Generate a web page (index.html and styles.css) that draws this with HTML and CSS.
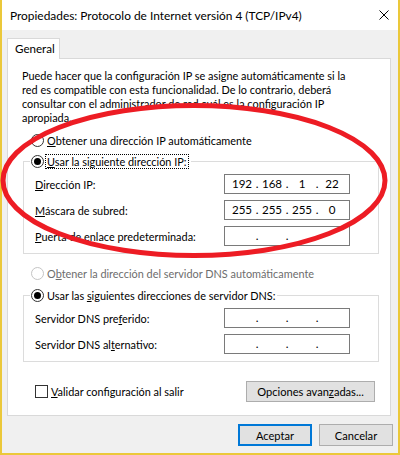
FILE: index.html
```html
<!DOCTYPE html>
<html lang="es">
<head>
<meta charset="utf-8">
<title>Propiedades: Protocolo de Internet versión 4 (TCP/IPv4)</title>
<link rel="stylesheet" href="styles.css">
</head>
<body>
<div class="window">
  <div class="titlebar">
    <span class="title">Propiedades: Protocolo de Internet versión 4 (TCP/IPv4)</span>
    <span class="close"><svg width="10" height="10" viewBox="0 0 10 10"><path d="M0.5 0.5L9.5 9.5M9.5 0.5L0.5 9.5" stroke="#000" stroke-width="1" fill="none"/></svg></span>
  </div>
  <div class="content">
    <div class="tabs"><div class="tab">General</div></div>
    <div class="panel">
      <p class="intro">Puede hacer que la configuración IP se asigne automáticamente si la<br>red es compatible con esta funcionalidad. De lo contrario, deberá<br>consultar con el administrador de red cuál es la configuración IP<br>apropiada.</p>

      <div class="radio-row first"><span class="radio"></span><span><u>O</u>btener una dirección IP automáticamente</span></div>

      <div class="group g1">
        <div class="legend"><span class="radio checked"></span><span class="focus"><u>U</u>sar la siguiente dirección IP:</span></div>
        <div class="field first-field"><span><u>D</u>irección IP:</span><span class="ip"><span class="seg">192</span><span class="dot">.</span><span class="seg">168</span><span class="dot">.</span><span class="seg">1</span><span class="dot">.</span><span class="seg">22</span></span></div>
        <div class="field"><span><u>M</u>áscara de subred:</span><span class="ip"><span class="seg">255</span><span class="dot">.</span><span class="seg">255</span><span class="dot">.</span><span class="seg">255</span><span class="dot">.</span><span class="seg">0</span></span></div>
        <div class="field"><span><u>P</u>uerta de enlace predeterminada:</span><span class="ip"><span class="seg"></span><span class="dot">.</span><span class="seg"></span><span class="dot">.</span><span class="seg"></span><span class="dot">.</span><span class="seg"></span></span></div>
      </div>

      <div class="radio-row disabled"><span class="radio"></span><span>O<u>b</u>tener la dirección del servidor DNS automáticamente</span></div>

      <div class="group g2">
        <div class="legend plain"><span class="radio checked"></span><span>Usar las <u>s</u>iguientes direcciones de servidor DNS:</span></div>
        <div class="field first-field"><span>Servidor DNS pre<u>f</u>erido:</span><span class="ip"><span class="seg"></span><span class="dot">.</span><span class="seg"></span><span class="dot">.</span><span class="seg"></span><span class="dot">.</span><span class="seg"></span></span></div>
        <div class="field"><span>Servidor DNS al<u>t</u>ernativo:</span><span class="ip"><span class="seg"></span><span class="dot">.</span><span class="seg"></span><span class="dot">.</span><span class="seg"></span><span class="dot">.</span><span class="seg"></span></span></div>
      </div>

      <div class="options-row">
        <label class="check"><span class="box"></span><span><u>V</u>alidar configuración al salir</span></label>
        <button class="btn adv">Opciones avan<u>z</u>adas...</button>
      </div>
    </div>
    <div class="footer">
      <button class="btn default">Aceptar</button>
      <button class="btn">Cancelar</button>
    </div>
  </div>
</div>
<svg class="annotation" width="400" height="455" viewBox="0 0 400 455"><ellipse cx="194" cy="180.5" rx="191" ry="75" fill="none" stroke="#ed1c24" stroke-width="5"/></svg>
</body>
</html>
```

FILE: styles.css
```css
* { box-sizing: border-box; }
html, body { margin: 0; padding: 0; }
body {
  position: relative;
  width: 400px;
  height: 455px;
  overflow: hidden;
  font-family: Lato, "Liberation Sans", sans-serif;
  font-size: 10.9px;
  color: #000;
  background: #fff;
}
u { text-decoration: underline; text-underline-offset: 1px; }

.window {
  width: 400px;
  height: 455px;
  border: 2px solid #ebc83a;
  border-top: 0;
  background: #f0f0f0;
  display: flex;
  flex-direction: column;
}
.titlebar {
  height: 30px;
  flex: none;
  background: #fff;
  display: flex;
  align-items: center;
  justify-content: space-between;
  padding: 0 9px 0 8px;
  font-size: 11.9px;
}
.close svg { display: block; }

.content {
  flex: 1;
  display: flex;
  flex-direction: column;
  padding: 8px 7px 0 5px;
}
.tabs { display: flex; height: 20px; position: relative; z-index: 1; }
.tab {
  width: 53px;
  height: 21px;
  background: #fff;
  border: 1px solid #d9d9d9;
  border-bottom: 0;
  padding-left: 7px;
  line-height: 19px;
  font-size: 11.6px;
}
.panel {
  background: #fff;
  border: 1px solid #d9d9d9;
  padding: 10px 0 13px 0;
}
.intro {
  margin: 0;
  padding-left: 14px;
  line-height: 14px;
}

.radio-row {
  display: flex;
  align-items: center;
  gap: 3px;
  height: 16px;
  padding-left: 23px;
}
.radio-row.first { margin-top: 7px; }
.radio-row.disabled { margin-top: 11px; color: #6d6d6d; }
.radio-row.disabled .radio { border-color: #c4c4c4; }

.radio {
  width: 13px;
  height: 13px;
  flex: none;
  border: 1px solid #333;
  border-radius: 50%;
  background: #fff;
  display: flex;
  align-items: center;
  justify-content: center;
}
.radio.checked::after {
  content: "";
  width: 7px;
  height: 7px;
  border-radius: 50%;
  background: #000;
}

.group {
  border: 1px solid #dcdcdc;
  margin: 0 11px 0 15px;
  padding: 0 28px 7px 11px;
  display: flex;
  flex-direction: column;
}
.g1 { margin-top: 13px; }
.g2 { margin-top: 14px; }
.legend {
  align-self: flex-start;
  display: flex;
  align-items: center;
  gap: 1px;
  height: 16px;
  margin: -9px 0 0 -5px;
  padding: 0 2px 0 1px;
  background: #fff;
}
.legend.plain { gap: 3px; }
.focus {
  border: 1px dotted #000;
  height: 15px;
  line-height: 13px;
  padding: 0 1px;
}

.field {
  display: flex;
  align-items: center;
  justify-content: space-between;
  height: 20px;
  margin-top: 6px;
}
.field.first-field { margin-top: 5px; }
.ip {
  width: 126px;
  height: 20px;
  border: 1px solid #7a7a7a;
  display: flex;
  padding-left: 4px;
  line-height: 18px;
  background: #fff;
  font-size: 11.6px;
}
.seg { width: 26px; text-align: center; }
.dot { width: 4px; text-align: center; }

.options-row {
  display: flex;
  align-items: center;
  justify-content: space-between;
  height: 21px;
  margin-top: 19px;
  padding: 0 15px 0 27px;
}
.check { display: flex; align-items: center; gap: 3px; }
.box {
  width: 13px;
  height: 13px;
  border: 1px solid #333;
  background: #fff;
}

.btn {
  font-family: inherit;
  font-size: 11.1px;
  color: #000;
  background: #e1e1e1;
  border: 1px solid #adadad;
  padding: 0;
  text-align: center;
}
.adv { width: 129px; height: 21px; }
.footer {
  display: flex;
  justify-content: flex-end;
  gap: 7px;
  margin: 8px -2px 0 0;
}
.footer .btn { width: 74px; height: 22px; }
.btn.default { border: 2px solid #0078d7; }

.annotation {
  position: absolute;
  left: 0;
  top: 0;
  pointer-events: none;
}
```
